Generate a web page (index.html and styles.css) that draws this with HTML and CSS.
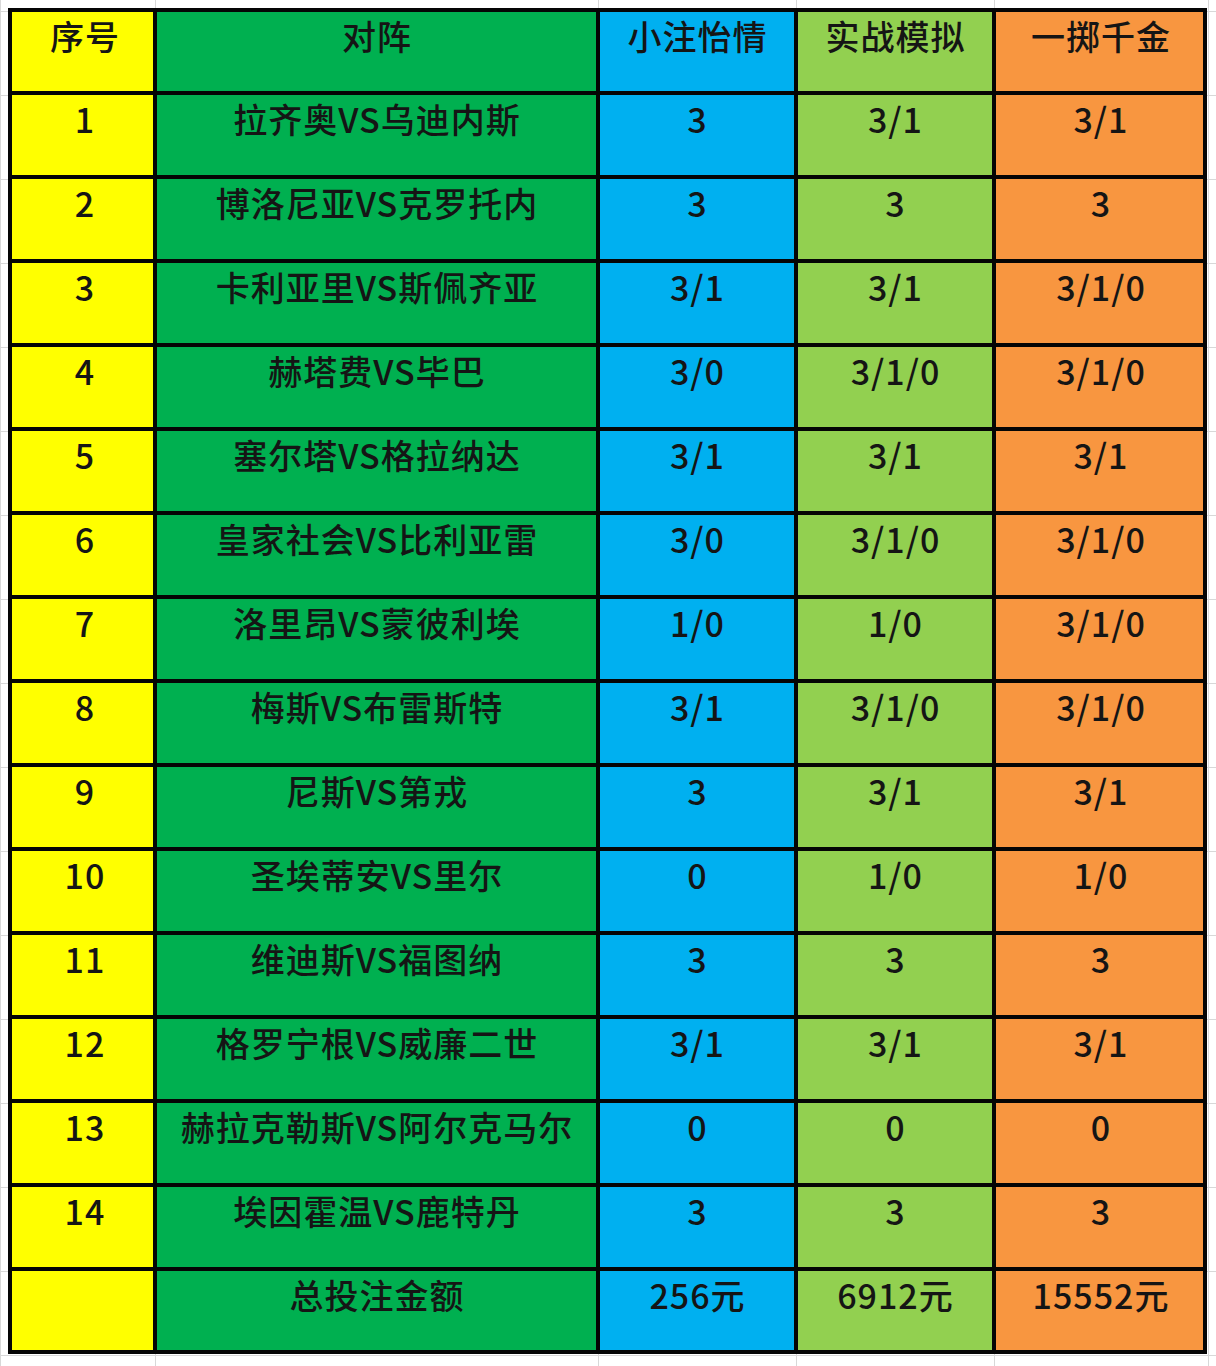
FILE: index.html
```html
<!DOCTYPE html>
<html lang="zh-CN">
<head>
<meta charset="utf-8">
<title>投注方案</title>
<link rel="stylesheet" href="styles.css">
</head>
<body>
<div class="sheet">
  <div class="cell c1">序号</div><div class="cell c2">对阵</div><div class="cell c3">小注怡情</div><div class="cell c4">实战模拟</div><div class="cell c5">一掷千金</div>

  <div class="cell c1">1</div><div class="cell c2">拉齐奥VS乌迪内斯</div><div class="cell c3">3</div><div class="cell c4">3/1</div><div class="cell c5">3/1</div>
  <div class="cell c1">2</div><div class="cell c2">博洛尼亚VS克罗托内</div><div class="cell c3">3</div><div class="cell c4">3</div><div class="cell c5">3</div>
  <div class="cell c1">3</div><div class="cell c2">卡利亚里VS斯佩齐亚</div><div class="cell c3">3/1</div><div class="cell c4">3/1</div><div class="cell c5">3/1/0</div>
  <div class="cell c1">4</div><div class="cell c2">赫塔费VS毕巴</div><div class="cell c3">3/0</div><div class="cell c4">3/1/0</div><div class="cell c5">3/1/0</div>
  <div class="cell c1">5</div><div class="cell c2">塞尔塔VS格拉纳达</div><div class="cell c3">3/1</div><div class="cell c4">3/1</div><div class="cell c5">3/1</div>
  <div class="cell c1">6</div><div class="cell c2">皇家社会VS比利亚雷</div><div class="cell c3">3/0</div><div class="cell c4">3/1/0</div><div class="cell c5">3/1/0</div>
  <div class="cell c1">7</div><div class="cell c2">洛里昂VS蒙彼利埃</div><div class="cell c3">1/0</div><div class="cell c4">1/0</div><div class="cell c5">3/1/0</div>
  <div class="cell c1">8</div><div class="cell c2">梅斯VS布雷斯特</div><div class="cell c3">3/1</div><div class="cell c4">3/1/0</div><div class="cell c5">3/1/0</div>
  <div class="cell c1">9</div><div class="cell c2">尼斯VS第戎</div><div class="cell c3">3</div><div class="cell c4">3/1</div><div class="cell c5">3/1</div>
  <div class="cell c1">10</div><div class="cell c2">圣埃蒂安VS里尔</div><div class="cell c3">0</div><div class="cell c4">1/0</div><div class="cell c5">1/0</div>
  <div class="cell c1">11</div><div class="cell c2">维迪斯VS福图纳</div><div class="cell c3">3</div><div class="cell c4">3</div><div class="cell c5">3</div>
  <div class="cell c1">12</div><div class="cell c2">格罗宁根VS威廉二世</div><div class="cell c3">3/1</div><div class="cell c4">3/1</div><div class="cell c5">3/1</div>
  <div class="cell c1">13</div><div class="cell c2">赫拉克勒斯VS阿尔克马尔</div><div class="cell c3">0</div><div class="cell c4">0</div><div class="cell c5">0</div>
  <div class="cell c1">14</div><div class="cell c2">埃因霍温VS鹿特丹</div><div class="cell c3">3</div><div class="cell c4">3</div><div class="cell c5">3</div>

  <div class="cell c1"></div><div class="cell c2">总投注金额</div><div class="cell c3">256元</div><div class="cell c4">6912元</div><div class="cell c5">15552元</div>
</div>
</body>
</html>
```

FILE: styles.css
```css
html, body {
  margin: 0;
  padding: 0;
}

body {
  width: 1216px;
  min-height: 1366px;
  background-color: #ffffff;
  background-image:
    linear-gradient(to right, #d8d8d8 0 1px, transparent 1px),
    linear-gradient(to right, transparent 155px, #d8d8d8 155px 156px, transparent 156px),
    linear-gradient(to right, transparent 598px, #d8d8d8 598px 599px, transparent 599px),
    linear-gradient(to right, transparent 796px, #d8d8d8 796px 797px, transparent 797px),
    linear-gradient(to right, transparent 994px, #d8d8d8 994px 995px, transparent 995px),
    linear-gradient(to right, transparent 1208px, #d8d8d8 1208px 1209px, transparent 1209px),
    linear-gradient(to bottom, #d8d8d8 0 1px, transparent 1px);
  background-size: 100% 100%, 100% 100%, 100% 100%, 100% 100%, 100% 100%, 100% 100%, 100% 84px;
  background-position: 0 0, 0 0, 0 0, 0 0, 0 0, 0 0, 0 11px;
  background-repeat: no-repeat, no-repeat, no-repeat, no-repeat, no-repeat, no-repeat, repeat-y;
  font-family: "Noto Sans CJK SC", "Noto Sans", sans-serif;
  color: #151515;
}

.sheet {
  margin: 8px 0 0 8px;
  width: 1199px;
  box-sizing: border-box;
  display: grid;
  grid-template-columns: 141px 439px 194px 194px 207px;
  grid-template-rows: 79px repeat(14, 80px) 79px;
  gap: 4px;
  padding: 4px;
  background: #050505;
}

.cell {
  font-size: 34px;
  font-weight: 500;
  line-height: 40px;
  letter-spacing: 1px;
  padding-top: 4px;
  padding-left: 1px;
  text-align: center;
  white-space: nowrap;
}

.c1 { background: #ffff00; padding-left: 5px; }
.c2 { background: #00b050; }
.c3 { background: #00b0f0; }
.c4 { background: #92d050; }
.c5 { background: #f89640; padding-left: 3px; }
```
